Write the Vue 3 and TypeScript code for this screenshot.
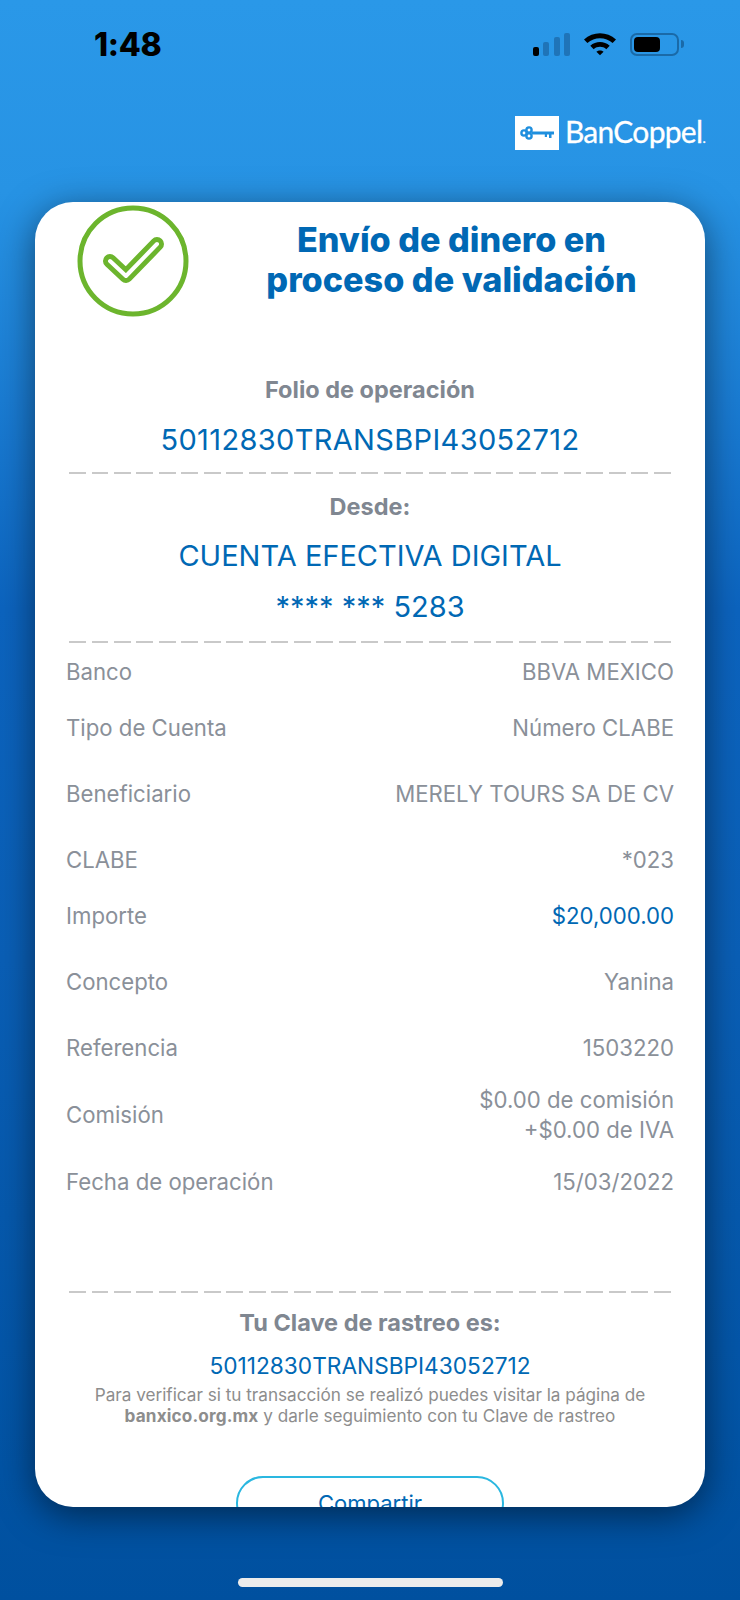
<template>
  <div class="screen">
    <div class="status-bar">
      <span class="time">1:48</span>
      <div class="status-icons">
        <div class="signal">
          <i class="bar bar-1 on"></i>
          <i class="bar bar-2"></i>
          <i class="bar bar-3"></i>
          <i class="bar bar-4"></i>
        </div>
        <svg class="wifi" width="34" height="23" viewBox="0 2 34 23">
          <path d="M1 8.5C10 .2 24 .2 33 8.5L29.6 12C22.6 5.6 11.4 5.6 4.4 12Z" fill="#000" />
          <path d="M7.3 14.7C12.8 9.7 21.2 9.7 26.7 14.7L23.3 18.2C19.7 15 14.3 15 10.7 18.2Z" fill="#000" />
          <path d="M13.4 20.8C15.5 18.9 18.5 18.9 20.6 20.8L17 24.3Z" fill="#000" />
        </svg>
        <div class="battery">
          <div class="battery-body"><div class="battery-fill"></div></div>
          <div class="battery-nub"></div>
        </div>
      </div>
    </div>

    <div class="brand">
      <div class="brand-box">
        <svg width="36" height="14" viewBox="0 0 36 14">
          <g fill="none" stroke="#1f8fde" stroke-width="2.4">
            <circle cx="5" cy="7" r="2.6" />
            <circle cx="10" cy="4" r="2.6" />
            <circle cx="10" cy="10" r="2.6" />
          </g>
          <path d="M13 5.6H35V8.6H32.5V12H30V8.6H28V11H25.8V8.6H13Z" fill="#1f8fde" />
        </svg>
      </div>
      <span class="brand-name">BanCoppel<small>.</small></span>
    </div>

    <main class="card">
      <header class="card-head">
        <svg class="check" width="112" height="112" viewBox="0 0 112 112">
          <circle cx="56" cy="56" r="53" fill="none" stroke="#6cb52d" stroke-width="5" />
          <path d="M33 56L49 71L80 39" fill="none" stroke="#6cb52d" stroke-width="14" stroke-linecap="round" stroke-linejoin="round" />
          <path d="M33 56L49 71L80 39" fill="none" stroke="#fff" stroke-width="4" stroke-linecap="round" stroke-linejoin="round" />
        </svg>
        <h1 class="title">Envío de dinero en<br />proceso de validación</h1>
      </header>

      <section class="block folio">
        <h2 class="label">Folio de operación</h2>
        <p class="value">50112830TRANSBPI43052712</p>
      </section>
      <div class="dash dash-folio"></div>

      <section class="block desde">
        <h2 class="label">Desde:</h2>
        <p class="value">CUENTA EFECTIVA DIGITAL</p>
        <p class="value mask">**** *** 5283</p>
      </section>
      <div class="dash"></div>

      <div class="rows">
        <div v-for="row in rows" :key="row.name" class="row" :class="row.spacing">
          <span>{{ row.name }}</span>
          <span class="row-value" :class="{ money: row.money }">
            <template v-for="(line, i) in row.lines" :key="i">{{ line }}<br v-if="i < row.lines.length - 1" /></template>
          </span>
        </div>
      </div>

      <div class="dash dash-last"></div>

      <section class="trace">
        <h2 class="label">Tu Clave de rastreo es:</h2>
        <p class="trace-value">50112830TRANSBPI43052712</p>
        <p class="hint">
          Para verificar si tu transacción se realizó puedes visitar la página de<br />
          <b>banxico.org.mx</b> y darle seguimiento con tu Clave de rastreo
        </p>
      </section>

      <button class="share">Compartir</button>
    </main>

    <div class="home-bar"></div>
  </div>
</template>

<script setup lang="ts">
interface Row {
  name: string;
  lines: string[];
  spacing: string;
  money?: boolean;
}

const rows: Row[] = [
  { name: 'Banco', lines: ['BBVA MEXICO'], spacing: 'first' },
  { name: 'Tipo de Cuenta', lines: ['Número CLABE'], spacing: 'near' },
  { name: 'Beneficiario', lines: ['MERELY TOURS SA DE CV'], spacing: 'far' },
  { name: 'CLABE', lines: ['*023'], spacing: 'far' },
  { name: 'Importe', lines: ['$20,000.00'], spacing: 'near', money: true },
  { name: 'Concepto', lines: ['Yanina'], spacing: 'far' },
  { name: 'Referencia', lines: ['1503220'], spacing: 'far' },
  { name: 'Comisión', lines: ['$0.00 de comisión', '+$0.00 de IVA'], spacing: 'tight' },
  { name: 'Fecha de operación', lines: ['15/03/2022'], spacing: 'tight' },
];
</script>

<style>
html,
body {
  margin: 0;
  background: #00509f;
}
</style>

<style scoped>
.screen {
  width: 740px;
  height: 1600px;
  overflow: hidden;
  display: flex;
  flex-direction: column;
  font-family: Inter, "Liberation Sans", sans-serif;
  background: linear-gradient(180deg, #2a98e8 0%, #2793e4 12%, #1a7cd3 25%, #0c64bf 38%, #0a5fb6 60%, #00509f 100%);
}

.status-bar {
  height: 88px;
  box-sizing: border-box;
  padding: 0 56px 0 94px;
  display: flex;
  align-items: center;
  justify-content: space-between;
}

.time {
  font-size: 32px;
  font-weight: 800;
  letter-spacing: -0.3px;
  color: #000;
}

.status-icons {
  display: flex;
  align-items: center;
  gap: 13px;
}

.signal {
  display: flex;
  align-items: flex-end;
  gap: 4.5px;
  height: 23px;
}

.bar {
  display: block;
  width: 6px;
  border-radius: 2px;
  background: #1f74b8;
}

.bar.on {
  background: #000;
}

.bar-1 { height: 9px; }
.bar-2 { height: 14px; }
.bar-3 { height: 19px; }
.bar-4 { height: 23px; }

.battery {
  display: flex;
  align-items: center;
  gap: 2px;
}

.battery-body {
  width: 49px;
  height: 23px;
  box-sizing: border-box;
  border: 2px solid #1a6aa8;
  border-radius: 7px;
  padding: 2px;
}

.battery-fill {
  width: 26px;
  height: 100%;
  background: #000;
  border-radius: 4px;
}

.battery-nub {
  width: 3px;
  height: 8px;
  background: #1a6aa8;
  border-radius: 0 3px 3px 0;
}

.brand {
  height: 34px;
  margin-top: 28px;
  padding-right: 35px;
  display: flex;
  justify-content: flex-end;
  align-items: center;
  gap: 6px;
}

.brand-box {
  width: 44px;
  height: 34px;
  background: #fff;
  display: flex;
  align-items: center;
  justify-content: center;
}

.brand-name {
  font-family: Lato, sans-serif;
  font-size: 30px;
  letter-spacing: -0.7px;
  color: #fff;
  line-height: 34px;
  padding-top: 2px;
  -webkit-text-stroke: 0.3px #fff;
}

.brand-name small {
  font-size: 14px;
}

.card {
  margin: 52px 35px 0;
  height: 1305px;
  flex: none;
  background: #fff;
  border-radius: 38px;
  overflow: hidden;
  box-shadow: 0 8px 36px rgba(0, 0, 0, 0.5);
  display: flex;
  flex-direction: column;
}

.card > * {
  flex: none;
}

.card-head {
  display: flex;
  align-items: flex-start;
  padding: 3px 15px 0 42px;
}

.check {
  flex: none;
}

.title {
  flex: 1;
  margin: 15px 0 0 24px;
  text-align: center;
  font-size: 34.2px;
  line-height: 40px;
  font-weight: 800;
  color: #0068b4;
}

.block {
  text-align: center;
}

.label {
  margin: 0;
  font-size: 23.5px;
  line-height: 28px;
  font-weight: 700;
  color: #808791;
}

.value {
  margin: 0;
  font-size: 29px;
  line-height: 36px;
  color: #0068b4;
}

.folio {
  margin-top: 59px;
}

.folio .value {
  margin-top: 18px;
  letter-spacing: 0.35px;
}

.desde {
  margin-top: 19px;
}

.desde .value {
  margin-top: 17px;
}

.desde .mask {
  margin-top: 15px;
}

.dash {
  margin: 16px 34px 0;
  height: 2px;
  background: repeating-linear-gradient(90deg, #c9c9c9 0 17px, transparent 17px 22.5px);
}

.dash-folio {
  margin-top: 14px;
}

.rows {
  padding: 0 31px;
  font-size: 22.2px;
  line-height: 30px;
  color: #8a9099;
}

.row {
  display: flex;
  justify-content: space-between;
  align-items: center;
}

.row.first { margin-top: 14px; }
.row.near { margin-top: 26px; }
.row.far { margin-top: 36px; }
.row.tight { margin-top: 22px; }

.row-value {
  text-align: right;
}

.row-value.money {
  color: #0068b4;
}

.dash-last {
  margin-top: 94px;
}

.trace {
  margin-top: 16px;
  text-align: center;
}

.trace-value {
  margin: 15px 0 0;
  font-size: 22.7px;
  line-height: 28px;
  color: #0068b4;
}

.hint {
  margin: 4px 0 0;
  font-size: 17.15px;
  line-height: 21px;
  color: #8d8d8d;
}

.hint b {
  font-weight: 700;
  letter-spacing: 0.15px;
}

.share {
  align-self: center;
  width: 268px;
  height: 54px;
  margin-top: 50px;
  padding: 0;
  background: #fff;
  border: 2px solid #2ab7e0;
  border-radius: 28px;
  font: inherit;
  font-size: 22px;
  color: #0068b4;
}

.home-bar {
  width: 265px;
  height: 9px;
  margin: 71px auto 0;
  flex: none;
  border-radius: 5px;
  background: #ececec;
}
</style>
